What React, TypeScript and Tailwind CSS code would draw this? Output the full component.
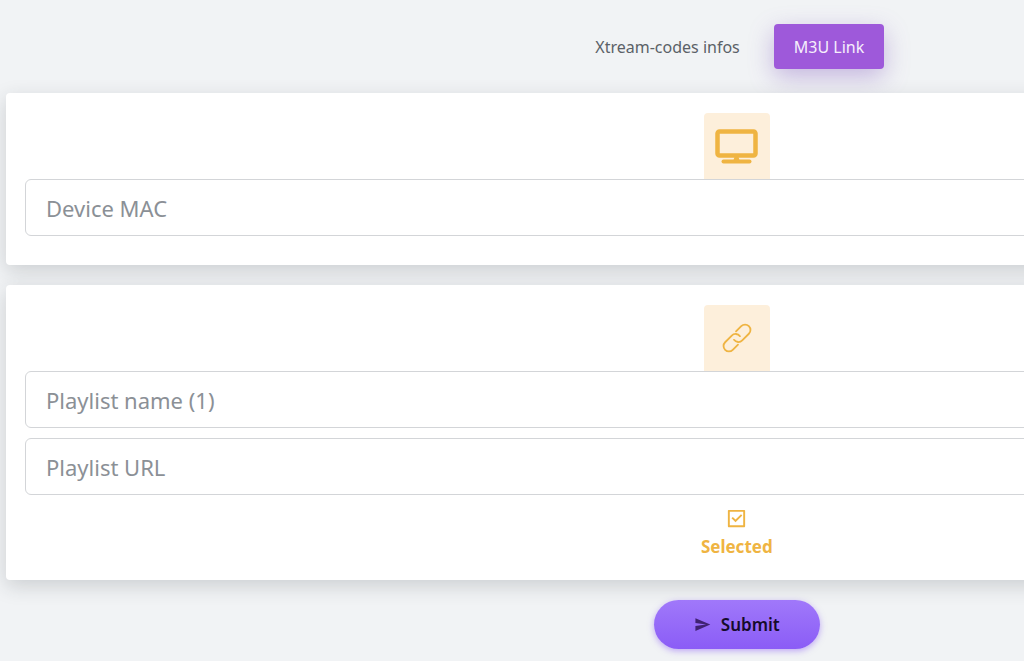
import { useState } from 'react';
import type { ReactNode } from 'react';
import { MdSend } from 'react-icons/md';
import { RiCheckboxBlankLine, RiCheckboxLine } from 'react-icons/ri';

type Mode = 'xtream' | 'm3u';

const tabBase = 'mr-3.5 h-[45px] rounded px-5 text-base';
const tabActive = 'bg-[#9e59da] text-[#f6effc] shadow-[0_8px_24px_rgba(130,90,190,0.4)]';
const tabIdle = 'text-[#5b6167]';

function MonitorIcon() {
  return (
    <svg viewBox="0 0 43 35" className="h-[35px] w-[43px]" fill="none" aria-hidden="true">
      <rect x="2.5" y="2.5" width="38" height="24" rx="2" stroke="currentColor" strokeWidth="4.5" />
      <path d="M19.5 28h4l1 3h-6z" fill="currentColor" />
      <path d="M8.5 32.5h26" stroke="currentColor" strokeWidth="4" strokeLinecap="round" />
    </svg>
  );
}

function ChainIcon() {
  return (
    <svg
      viewBox="-15 -15 30 30"
      className="h-[30px] w-[30px]"
      fill="none"
      stroke="currentColor"
      strokeWidth="1.8"
      strokeLinecap="round"
      aria-hidden="true"
    >
      <g transform="rotate(-45)">
        <path d="M-4 5.4H-11.4A5.4 5.4 0 0 1-11.4-5.4H-2A5.4 5.4 0 0 1 3.4 .8" />
        <path d="M4-5.4H11.4A5.4 5.4 0 0 1 11.4 5.4H2A5.4 5.4 0 0 1-3.4-.8" />
      </g>
    </svg>
  );
}

function IconTile({ children }: { children: ReactNode }) {
  return (
    <div className="flex h-[66px] w-[66px] items-center justify-center rounded-t bg-[#fdefdb] text-[#efb442]">
      {children}
    </div>
  );
}

function Card({ children }: { children: ReactNode }) {
  return (
    <section className="flex flex-col items-center rounded bg-white px-[19px] pt-5 shadow-[0_6px_20px_rgba(40,45,50,0.18)]">
      {children}
    </section>
  );
}

function Field({ label, name }: { label: string; name: string }) {
  return (
    <input
      type="text"
      name={name}
      aria-label={label}
      placeholder={label}
      className="h-[57px] w-full rounded-md border border-[#d3d5d8] bg-white px-5 text-[22px] text-[#333] outline-none placeholder:text-[#8b9096]"
    />
  );
}

export default function App() {
  const [mode, setMode] = useState<Mode>('m3u');
  const [selected, setSelected] = useState(true);

  return (
    <div className="min-h-screen overflow-hidden bg-[#f1f3f5] font-['Noto_Sans','Open_Sans',sans-serif]">
      {/* The form is wider than the window and runs off its right edge */}
      <form className="w-[143.9%] px-1.5 pb-3" onSubmit={(e) => e.preventDefault()}>
        <nav className="flex justify-center pt-6 pb-6">
          <button
            type="button"
            onClick={() => setMode('xtream')}
            className={`${tabBase} ${mode === 'xtream' ? tabActive : tabIdle}`}
          >
            Xtream-codes infos
          </button>
          <button
            type="button"
            onClick={() => setMode('m3u')}
            className={`${tabBase} ${mode === 'm3u' ? tabActive : tabIdle}`}
          >
            M3U Link
          </button>
        </nav>

        <div className="flex flex-col gap-5">
          <Card>
            <IconTile>
              <MonitorIcon />
            </IconTile>
            <div className="w-full pb-[29px]">
              <Field label="Device MAC" name="mac" />
            </div>
          </Card>

          <Card>
            <IconTile>
              <ChainIcon />
            </IconTile>
            <div className="flex w-full flex-col gap-2.5">
              <Field label="Playlist name (1)" name="playlistName" />
              <Field label="Playlist URL" name="playlistUrl" />
            </div>
            <label className="mt-3 mb-[19px] flex cursor-pointer flex-col items-center gap-[3px] text-[#efb442]">
              <input
                type="checkbox"
                checked={selected}
                onChange={(e) => setSelected(e.target.checked)}
                className="sr-only"
              />
              {selected ? <RiCheckboxLine size={23} /> : <RiCheckboxBlankLine size={23} />}
              <span className="text-[17px] leading-7 font-bold">Selected</span>
            </label>
          </Card>
        </div>

        <div className="flex justify-center pt-5">
          <button
            type="submit"
            className="flex h-[49px] w-[166px] items-center justify-center gap-2.5 rounded-full bg-linear-to-b from-[#a078fa] to-[#8b5cf6] text-[17px] font-semibold text-[#160b2b] shadow-[0_2px_6px_rgba(139,92,246,0.5)]"
          >
            <MdSend size={17} className="text-[#402272]" />
            Submit
          </button>
        </div>
      </form>
    </div>
  );
}
